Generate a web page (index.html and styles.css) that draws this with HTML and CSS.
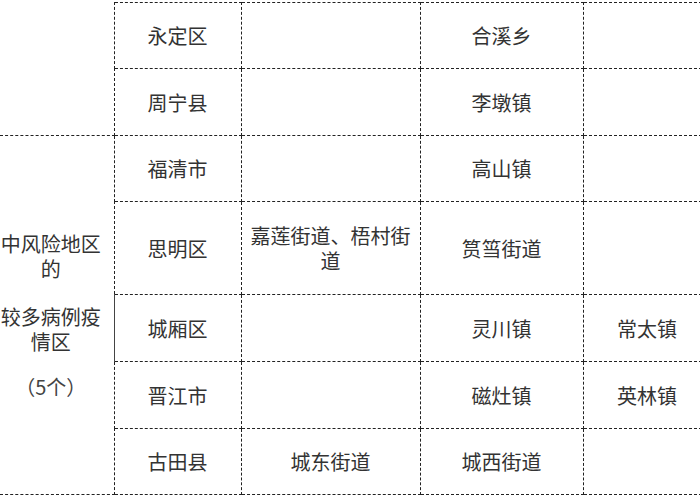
FILE: index.html
```html
<!DOCTYPE html>
<html lang="zh-CN">
<head>
<meta charset="utf-8">
<link rel="stylesheet" href="styles.css">
</head>
<body>
<div class="viewport">
<table class="risk">
  <colgroup>
    <col class="c1"><col class="c2"><col class="c3"><col class="c4"><col class="c5">
  </colgroup>
  <tr class="h66">
    <td class="cat top-open" rowspan="2"></td>
    <td>永定区</td><td></td><td>合溪乡</td><td></td>
  </tr>
  <tr class="h67">
    <td>周宁县</td><td></td><td>李墩镇</td><td></td>
  </tr>
  <tr class="h66">
    <td class="cat" rowspan="5">
      <p>中风险地区的</p>
      <p class="p2">较多病例疫情区</p>
      <p class="p3">（5个）</p>
    </td>
    <td>福清市</td><td></td><td>高山镇</td><td></td>
  </tr>
  <tr class="h93">
    <td>思明区</td><td>嘉莲街道、梧村街道</td><td>筼筜街道</td><td></td>
  </tr>
  <tr class="h67">
    <td class="solid-left">城厢区</td><td></td><td>灵川镇</td><td>常太镇</td>
  </tr>
  <tr class="h67">
    <td>晋江市</td><td></td><td>磁灶镇</td><td>英林镇</td>
  </tr>
  <tr class="h66">
    <td>古田县</td><td>城东街道</td><td>城西街道</td><td></td>
  </tr>
</table>
</div>
</body>
</html>
```

FILE: styles.css
```css
html, body {
  margin: 0;
  padding: 0;
  background: #ffffff;
  overflow: hidden;
}

.viewport {
  width: 700px;
  height: 500px;
  overflow: hidden;
  padding-top: 2px;
  box-sizing: border-box;
}

.risk {
  border-collapse: collapse;
  table-layout: fixed;
  width: 711px;
  font-family: "Noto Sans CJK SC", "Noto Sans", sans-serif;
  font-size: 20px;
  line-height: 25px;
  color: #333333;
}

.c1 { width: 114px; }
.c2 { width: 127px; }
.c3 { width: 179px; }
.c4 { width: 163px; }
.c5 { width: 128px; }

.risk td {
  border: 1px dashed #222222;
  text-align: center;
  vertical-align: middle;
  padding: 0 6px;
}

.h66 { height: 66px; }
.h67 { height: 67px; }
.h93 { height: 93px; }

.risk td.cat {
  border-left: none;
  padding: 0 12px 0 0;
}

.risk td.top-open {
  border-top: none;
}

.risk td.solid-left {
  border-left: 1px solid #444444;
}

.cat p {
  margin: 0;
}

.cat .p2 {
  margin-top: 23px;
}

.cat .p3 {
  margin-top: 20px;
  color: #444444;
}
```
